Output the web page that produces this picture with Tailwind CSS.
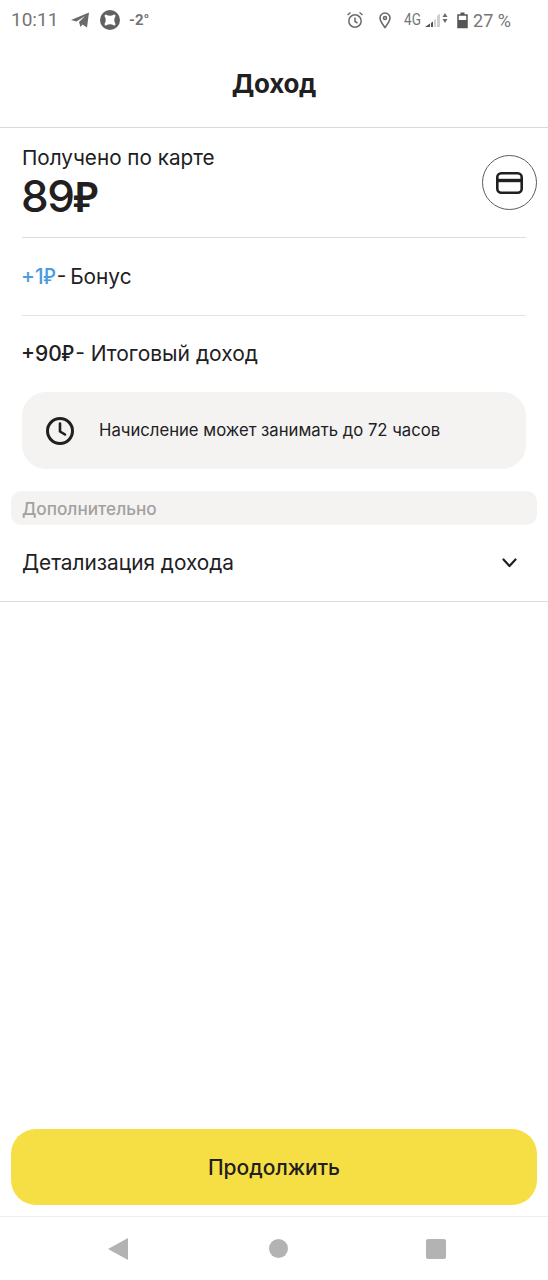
<!DOCTYPE html>
<html lang="ru"><head><meta charset="utf-8">
<script src="https://cdn.jsdelivr.net/npm/@tailwindcss/browser@4"></script>
</head>
<body class="bg-white">
<div class="w-[548px] h-[1280px] flex flex-col font-['Inter','Noto_Sans',sans-serif] text-[#21201f] overflow-hidden">
  <!-- status bar -->
  <div class="h-[40px] flex items-center justify-between pl-[11px] pr-[37px] text-[#757575] font-['Roboto',sans-serif]">
    <div class="flex items-center">
      <span class="text-[19px] w-[60px]">10:11</span>
      <svg class="w-[20px] h-[18px] -ml-[1px]" viewBox="0 0 20 18"><path fill="#6a6a6a" d="M1 9 19 1.500 17 16.500 12.500 13.500 10.500 16 9 11 15 5 6.500 10.500Z"/></svg>
      <svg class="w-[20px] h-[20px] ml-[10px]" viewBox="0 0 20 20"><circle cx="10" cy="10" r="10" fill="#616161"/><path fill="#fff" d="M4.500 6Q4.500 4.500 6 4.500 10 7 14 4.500 15.500 4.500 15.500 6 13 10 15.500 14 15.500 15.500 14 15.500 10 13 6 15.500 4.500 15.500 4.500 14 7 10 4.500 6Z"/></svg>
      <span class="text-[15px] font-bold ml-[9px]">-2°</span>
    </div>
    <div class="flex items-center">
      <svg class="w-[18px] h-[18px]" viewBox="0 0 18 18" fill="none" stroke="#6a6a6a" stroke-width="1.500"><circle cx="9" cy="10" r="6.200"/><path d="M9 6.500V10.500L11.500 12M1.500 4 4.500 1.500M16.500 4 13.500 1.500"/></svg>
      <svg class="w-[14px] h-[18px] ml-[14px]" viewBox="0 0 14 18" fill="none" stroke="#6a6a6a" stroke-width="1.600"><path d="M7 16.500C4 12.500 2 10 2 7A5 5 0 0 1 12 7C12 10 10 12.500 7 16.500Z"/><circle cx="7" cy="7" r="1.500"/></svg>
      <span class="text-[16px] ml-[12px] scale-x-[0.85] origin-left w-[17px]">4G</span>
      <svg class="w-[24px] h-[18px] ml-[4px]" viewBox="0 0 24 18"><path fill="#555" d="M0 16 5 16 5 12.500 0 16ZM6 16H8V10.500L6 12Z"/><path fill="#cfcfcf" d="M9 16H11V7.500L9 9.500ZM12 16H15V2.500L12 5Z"/><path fill="#6a6a6a" d="M20 2 22.500 6H17.500ZM20 12 17.500 8H22.500Z"/></svg>
      <svg class="w-[11px] h-[18px] ml-[8px]" viewBox="0 0 11 18"><path fill="none" stroke="#555" stroke-width="1.500" d="M1 4H10V16.500H1Z"/><path fill="#555" d="M3.500 1.500H7.500V4H3.500ZM1 9H10V17H1Z"/></svg>
      <span class="text-[18px] ml-[5px]">27 %</span>
    </div>
  </div>

  <!-- title -->
  <div class="h-[88px] flex items-center justify-center border-b border-[#d9d9d9] pt-[1px]">
    <h1 class="text-[26px] font-bold leading-none tracking-[-0.3px]">Доход</h1>
  </div>

  <!-- received -->
  <div class="mx-[22px] h-[110px] border-b border-[#dcdcdc] flex justify-between">
    <div>
      <div class="text-[20.7px] leading-[26px] mt-[17px]">Получено по карте</div>
      <div class="text-[44px] leading-[50px] font-medium tracking-[-1.500px] -ml-[1px]">89<span class="font-['Noto_Sans'] font-semibold text-[42px]">₽</span></div>
    </div>
    <div class="w-[55px] h-[55px] rounded-full border border-[#5c5c5c] flex items-center justify-center mt-[27px] -mr-[11px]">
      <svg class="w-[27px] h-[22px]" viewBox="0 0 27 22" fill="none" stroke="#21201f" stroke-width="2.600"><rect x="1.300" y="1.300" width="24.400" height="19.400" rx="4"/><path d="M1.300 8.500H25.700" stroke-width="3.400"/></svg>
    </div>
  </div>

  <div class="mx-[22px] h-[78px] border-b border-[#e2e2e2] flex items-center text-[20.8px]">
    <span class="-ml-[1px] mr-[1px] text-[#4c9be0] font-medium">+1<span class="font-['Noto_Sans']">₽</span></span><span class="[word-spacing:-2px]">- Бонус</span>
  </div>

  <div class="mx-[22px] h-[76px] flex items-center text-[21px]">
    <span class="-ml-[1px] mr-[1px] font-medium">+90<span class="font-['Noto_Sans']">₽</span></span><span>- Итоговый доход</span>
  </div>

  <!-- notice -->
  <div class="mx-[22px] h-[77px] rounded-[24px] bg-[#f4f3f2] flex items-center pl-[24px] pt-[1px]">
    <svg class="w-[28px] h-[28px]" viewBox="0 0 28 28" fill="none" stroke="#21201f" stroke-width="3"><circle cx="14" cy="14" r="12.500"/><path d="M14 6.500V14.500L19 17.500" stroke-width="2.600" stroke-linecap="round" stroke-linejoin="round"/></svg>
    <span class="text-[16.7px] ml-[25px]">Начисление может занимать до 72 часов</span>
  </div>

  <!-- additional -->
  <div class="mx-[11px] mt-[22px] h-[34px] rounded-[10px] bg-[#f4f3f2] flex items-center pl-[11px] pt-[1px] text-[17.2px] font-medium text-[#a3a19f]">Дополнительно</div>

  <div class="h-[77px] border-b border-[#dcdcdc] flex items-center justify-between pl-[22px] pr-[31px] text-[20.8px]">
    <span>Детализация дохода</span>
    <svg class="w-[15px] h-[10px]" viewBox="0 0 15 10" fill="none" stroke="#21201f" stroke-width="2.200" stroke-linecap="round" stroke-linejoin="round"><path d="M1.500 1.500 7.500 8 13.500 1.500"/></svg>
  </div>

  <div class="flex-1"></div>

  <!-- action -->
  <div class="px-[11px] pb-[11px] border-b border-[#efefef]">
    <button class="w-full h-[76px] rounded-[25px] bg-[#f6df45] pt-[2px] text-[21px] font-medium text-[#21201f]">Продолжить</button>
  </div>

  <!-- nav -->
  <div class="h-[63px] relative flex items-center justify-between pl-[108px] pr-[102px]">
    <svg class="w-[20px] h-[22px]" viewBox="0 0 20 22"><path fill="#b3b3b3" d="M20 0V22L0 11Z"/></svg>
    <div class="w-[19px] h-[19px] rounded-full bg-[#b3b3b3] ml-[2px]"></div>
    <div class="w-[20px] h-[20px] rounded-[2px] bg-[#b3b3b3]"></div>
  </div>
</div>
</body></html>
